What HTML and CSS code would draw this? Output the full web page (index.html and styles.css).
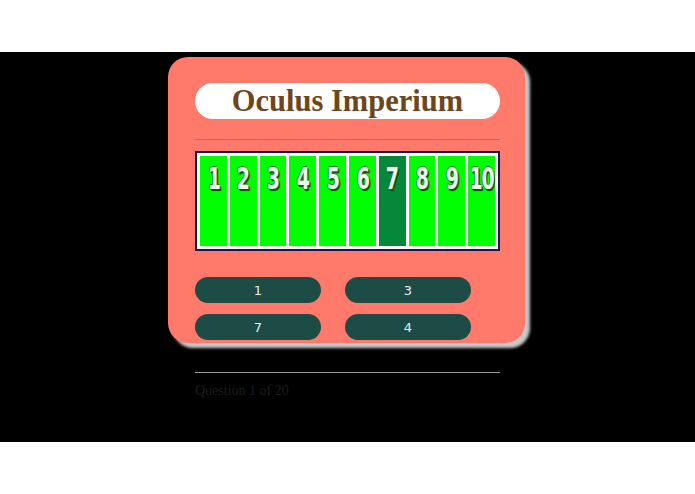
FILE: index.html
```html
<!DOCTYPE html>
<html>
<head>
<meta charset="utf-8">
<link rel="stylesheet" href="styles.css">
</head>
<body>
<main class="stage">
  <section class="card">
    <div class="title-pill"><h1 class="title">Oculus Imperium</h1></div>
    <hr class="card-rule">
    <div class="bar">
      <div class="cell"><span>1</span></div>
      <div class="cell"><span>2</span></div>
      <div class="cell"><span>3</span></div>
      <div class="cell"><span>4</span></div>
      <div class="cell"><span>5</span></div>
      <div class="cell"><span>6</span></div>
      <div class="cell cell-dark"><span>7</span></div>
      <div class="cell"><span>8</span></div>
      <div class="cell"><span>9</span></div>
      <div class="cell"><span>10</span></div>
    </div>
    <div class="answers">
      <button class="answer">1</button>
      <button class="answer">3</button>
      <button class="answer">7</button>
      <button class="answer">4</button>
    </div>
  </section>
  <div class="footer">
    <hr class="footer-rule">
    <p class="progress">Question 1 of 20</p>
  </div>
</main>
</body>
</html>
```
FILE: styles.css
```css
html, body {
  margin: 0;
  padding: 0;
  background: #fff;
}
.stage {
  margin-top: 52px;
  height: 390px;
  background: #000;
  padding-top: 5px;
  box-sizing: border-box;
}
.card {
  width: 357px;
  margin-left: 168px;
  box-sizing: border-box;
  background: #ff7a6b;
  border-radius: 20px;
  padding: 26px 25px 3px 27px;
  box-shadow: 5px 5px 3px #c8c8c8;
}
.title-pill {
  background: #fff;
  border-radius: 18px;
  height: 36px;
  display: flex;
  align-items: center;
  justify-content: center;
}
.title {
  margin: 0;
  font-family: "Liberation Serif", serif;
  font-weight: bold;
  font-size: 30.5px;
  color: #6b4720;
  line-height: 1;
}
.card-rule {
  border: 0;
  border-top: 1px solid #c8665a;
  margin: 20px 0 11px;
  height: 0;
}
.bar {
  border: 2px solid #1f1450;
  background: #fff;
  padding: 3px;
  height: 100px;
  box-sizing: border-box;
  display: flex;
  gap: 3px;
  width: 305px;
}
.bar .cell {
  flex: 1 1 0;
  min-width: 0;
  background: #00ff00;
  display: flex;
  justify-content: center;
  padding-top: 6px;
}
.bar .cell-dark {
  background: #06883a;
}
.cell span {
  font-family: "DejaVu Sans Condensed", "DejaVu Sans", sans-serif;
  font-stretch: condensed;
  font-weight: bold;
  font-size: 31px;
  line-height: 32px;
  color: #eafbe8;
  letter-spacing: -2px;
  display: inline-block;
  flex-shrink: 0;
  transform: scaleX(0.68);
  text-shadow: 1px 1px 0 #0c5a22, -1px 0 0 #2a7a3a, 0 -1px 0 #2a7a3a, 2px 2px 1px #0a4a1c;
}
.answers {
  margin-top: 26px;
  display: grid;
  grid-template-columns: 126px 126px;
  column-gap: 24px;
  row-gap: 11px;
}
.answer {
  height: 26px;
  border: 0;
  border-radius: 13px;
  background: #1d4c47;
  color: #e6eeee;
  font-family: "DejaVu Sans", sans-serif;
  font-size: 13px;
  padding: 0;
}
.footer {
  margin-left: 195px;
  width: 305px;
  margin-top: 29px;
}
.footer-rule {
  border: 0;
  border-top: 1px solid #9a9a9a;
  margin: 0;
  height: 0;
}
.progress {
  margin: 10px 0 0;
  font-family: "Liberation Serif", serif;
  font-size: 14px;
  color: #1c1c1c;
}
```
